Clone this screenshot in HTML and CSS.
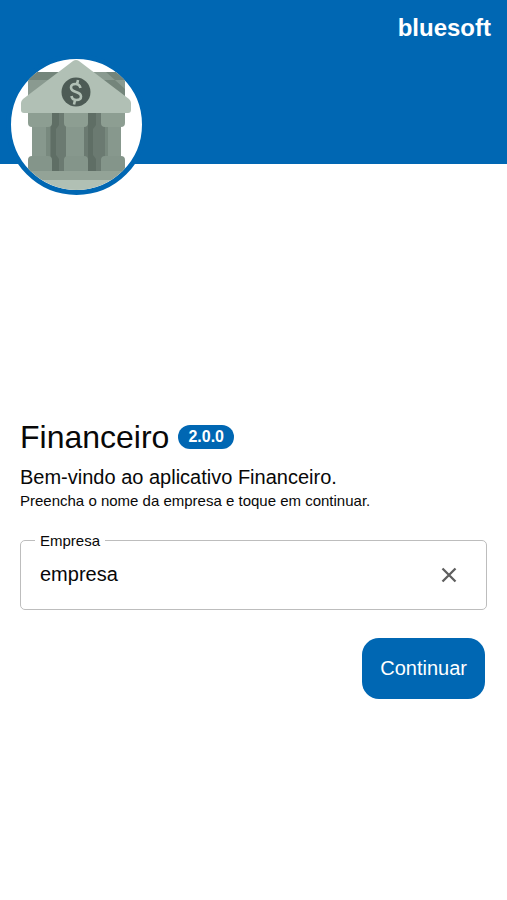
FILE: index.html
```html
<!DOCTYPE html>
<html lang="pt-BR">
<head>
    <meta charset="UTF-8">
    <meta name="viewport" content="width=device-width, initial-scale=1.0">
    <title>Financeiro</title>
    <link rel="stylesheet" href="styles.css">
</head>
<body>

    <header class="header">
        <span class="brand">bluesoft</span>
        <div class="avatar">
            <svg class="avatar-icon" viewBox="0 0 131 131" aria-hidden="true">
                <!-- Back wall -->
                <path fill="#8a9a90" d="M17 15q0-2 2-2h93q2 0 2 2v26H17z"/>
                <path fill="#74857b" d="M19 13h93q2 0 2 2v6H17v-6q0-2 2-2zM78 13l36 30V30L95 13z"/>
                <path fill="#6b7a71" d="M26 52h80v62H26z"/>
                <path fill="#5f6e65" d="M40 52h8v14l-3 4v26l3 4v14h-8zM77 52h8v14l-3 4v26l3 4v14h-8z"/>
                <!-- Columns -->
                <path fill="#87988d" d="M21 64h16v36H21zM55 64h18v36H55zM94 64h16v36H94z"/>
                <path fill="#78897e" d="M35 64h4v36h-4zM94 64h3v36h-3z"/>
                <path fill="#8d9e92" d="M17 52h24v12q0 4-4 4H21q-4 0-4-4zM53 52h24v12q0 4-4 4H57q-4 0-4-4zM90 52h24v12q0 4-4 4H94q-4 0-4-4z"/>
                <path fill="#84958a" d="M17 113v-12q0-4 4-4h16q4 0 4 4v12zM53 113v-12q0-4 4-4h16q4 0 4 4v12zM90 113v-12q0-4 4-4h16q4 0 4 4v12z"/>
                <!-- Steps -->
                <path fill="#93a397" d="M17 112h97v9H17z"/>
                <path fill="#b1c0b4" d="M10 121h111v10H10z"/>
                <!-- Roof -->
                <path fill="#b1c0b5" d="M62 2q3-2 6 0l50 38q2 2 2 4v7q0 3-3 3H13q-3 0-3-3v-7q0-2 2-4z"/>
                <circle cx="65" cy="33" r="14.500" fill="#4d5b55"/>
                <path fill="none" stroke="#b1c0b5" stroke-width="2.600" d="M69.500 29q-1-4-5-4-4.500 0-4.500 3.500 0 3 5 4.500 5 1.500 5 4.500 0 3.500-4.500 3.500-4.500 0-5-4M67 21l-1 4.500M64 41l-1 4.500"/>
            </svg>
        </div>
    </header>

    <main class="content">
        <div class="title-row">
            <h1 class="title">Financeiro</h1>
            <span class="version">2.0.0</span>
        </div>
        <p class="welcome">Bem-vindo ao aplicativo Financeiro.</p>
        <p class="hint">Preencha o nome da empresa e toque em continuar.</p>

        <form class="form">
            <fieldset class="field">
                <legend class="field-legend"><label for="empresa">Empresa</label></legend>
                <div class="field-row">
                    <input class="field-input" type="text" id="empresa" name="empresa" value="empresa">
                    <button class="clear-button" type="button" aria-label="Limpar">
                        <svg width="16" height="16" viewBox="0 0 16 16" aria-hidden="true">
                            <path d="M1.500 1.500l13 13M14.500 1.500l-13 13" stroke="#5f5f5f" stroke-width="2.300"/>
                        </svg>
                    </button>
                </div>
            </fieldset>
            <button class="submit-button" type="submit">Continuar</button>
        </form>
    </main>

</body>
</html>
```
FILE: styles.css
```css
:root {
    --primary: #0067b3;
    --border: #bdbdbd;
    --text: #080808;
}

* {
    box-sizing: border-box;
}

body {
    margin: 0;
    min-height: 100vh;
    display: flex;
    flex-direction: column;
    background: #fff;
    color: var(--text);
    font-family: "Liberation Sans", Arial, sans-serif;
}

/* Header */
.header {
    position: relative;
    display: flex;
    justify-content: flex-end;
    height: 164px;
    padding: 8px 16px;
    background: var(--primary);
}

.brand {
    color: #fff;
    font-size: 24px;
    font-weight: bold;
    line-height: 40px;
}

/* Overlaps the lower edge of the header */
.avatar {
    position: absolute;
    left: 6px;
    bottom: -31px;
    width: 141px;
    height: 141px;
    border: 5px solid var(--primary);
    border-radius: 50%;
    background: #fff;
    overflow: hidden;
}

.avatar-icon {
    display: block;
    width: 100%;
}

/* Content */
.content {
    flex: 1;
    display: flex;
    flex-direction: column;
    justify-content: center;
    padding: 51px 20px 0;
}

.title-row {
    display: flex;
    align-items: center;
    gap: 9px;
}

.title {
    margin: 0;
    font-size: 32px;
    font-weight: normal;
    line-height: 40px;
}

.version {
    padding: 0 10px;
    border-radius: 12px;
    background: var(--primary);
    color: #fff;
    font-size: 16px;
    font-weight: bold;
    line-height: 24px;
}

.welcome {
    margin: 8px 0 0;
    font-size: 20px;
    line-height: 24px;
}

.hint {
    margin: 0;
    font-size: 15px;
    line-height: 24px;
}

/* Form */
.form {
    display: flex;
    flex-direction: column;
    margin-top: 20px;
}

.field {
    min-width: 0;
    margin: 0;
    padding: 0 24px 8px 14px;
    border: 1px solid var(--border);
    border-radius: 5px;
}

.field-legend {
    padding: 0 5px;
    font-size: 15px;
    line-height: 16px;
}

.field-row {
    display: flex;
    align-items: center;
}

.field-input {
    flex: 1;
    min-width: 0;
    height: 52px;
    padding: 0 5px;
    border: 0;
    outline: 0;
    background: transparent;
    color: inherit;
    font: inherit;
    font-size: 20px;
}

.clear-button {
    display: flex;
    padding: 5px;
    border: 0;
    background: none;
    cursor: pointer;
}

.submit-button {
    align-self: flex-end;
    height: 61px;
    margin: 28px 2px 0 0;
    padding: 0 18px;
    border: 0;
    border-radius: 17px;
    background: var(--primary);
    color: #fff;
    font: inherit;
    font-size: 20px;
    cursor: pointer;
}
```
